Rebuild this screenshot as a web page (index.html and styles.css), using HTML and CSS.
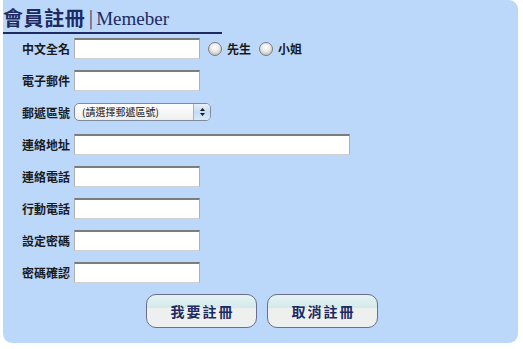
FILE: index.html
```html
<!DOCTYPE html>
<html lang="zh-Hant">
<head>
<meta charset="utf-8">
<link rel="stylesheet" href="styles.css">
</head>
<body>
<div class="panel">
  <div class="title"><span class="zh">會員註冊</span><span class="bar">|</span><span class="en">Memeber</span></div>
  <div class="form">
    <div class="row"><label class="lbl">中文全名</label><input class="txt" type="text">
      <span class="radio"></span><span class="opt">先生</span><span class="radio"></span><span class="opt">小姐</span></div>
    <div class="row"><label class="lbl">電子郵件</label><input class="txt" type="text"></div>
    <div class="row"><label class="lbl">郵遞區號</label>
      <div class="select"><span class="sel-text">(請選擇郵遞區號)</span><span class="sel-arrow"><svg width="7" height="10" viewBox="0 0 7 10"><path d="M1 4 L3.5 1 L6 4 Z M1 6 L3.5 9 L6 6 Z" fill="#1a1a1a"/></svg></span></div></div>
    <div class="row"><label class="lbl">連絡地址</label><input class="txt wide" type="text"></div>
    <div class="row"><label class="lbl">連絡電話</label><input class="txt" type="text"></div>
    <div class="row"><label class="lbl">行動電話</label><input class="txt" type="text"></div>
    <div class="row"><label class="lbl">設定密碼</label><input class="txt" type="text"></div>
    <div class="row"><label class="lbl">密碼確認</label><input class="txt" type="text"></div>
  </div>
  <div class="buttons">
    <button class="btn">我要註冊</button>
    <button class="btn">取消註冊</button>
  </div>
</div>
</body>
</html>
```
FILE: styles.css
```css
html, body { margin: 0; padding: 0; background: #ffffff; }
body { font-family: "Noto Sans CJK TC", "Liberation Sans", sans-serif; }
.panel {
  margin-left: 3px;
  width: 515px;
  height: 343px;
  background: #bbd8fa;
  border-radius: 0 9px 9px 9px;
  box-sizing: border-box;
}
.title {
  width: 219px;
  height: 34px;
  border-bottom: 2px solid #1d2a63;
  display: flex;
  align-items: flex-end;
  color: #1d2a63;
  box-sizing: border-box;
  padding-bottom: 2px;
}
.title .zh { font-size: 20px; line-height: 24px; font-weight: 700; letter-spacing: 0.6px; }
.title .bar { font-family: "DejaVu Sans", sans-serif; font-size: 20px; line-height: 24px; margin: 0 2px 0 2px; font-weight: 300; }
.title .en { font-family: "Liberation Serif", serif; font-size: 19px; line-height: 22px; }
.form { margin-top: 4px; display: flex; flex-direction: column; }
.row { height: 32px; display: flex; align-items: flex-start; }
.lbl {
  width: 67px;
  text-align: right;
  font-size: 12px;
  font-weight: 700;
  line-height: 21px;
  color: #1a1a1a;
  margin-right: 4px;
}
.txt {
  width: 126px;
  height: 21px;
  box-sizing: border-box;
  border: 1px solid #b0b0b0;
  border-top: 2px solid #7c7c7c;
  border-bottom-color: #d0d0d0;
  background: #fff;
  margin: 0;
  padding: 0;
}
.txt.wide { width: 276px; }
.radio {
  width: 12px; height: 12px; border-radius: 50%;
  margin: 4px 3px 0 8px;
  background: radial-gradient(circle at 50% 35%, #ffffff 0%, #e8e8e8 45%, #aaaaaa 100%);
  border: 1px solid #7d7d7d;
}
.opt { font-size: 12px; font-weight: 700; line-height: 21px; color: #1a1a1a; margin-left: 2px; }
.select {
  margin-top: 1px;
  width: 137px; height: 18px;
  box-sizing: border-box;
  border: 1px solid #7f8a9a;
  border-radius: 5px;
  background: linear-gradient(#ffffff, #eeeeee);
  display: flex;
  align-items: center;
  justify-content: space-between;
  overflow: hidden;
}
.sel-text { font-size: 10px; color: #111; padding-left: 7px; line-height: 16px; }
.sel-arrow {
  width: 16px; height: 16px;
  display: flex; align-items: center; justify-content: center;
  background: linear-gradient(#e6f0fb, #c3dbf5 50%, #d9e8f9);
  border-left: 1px solid #9fb3cf;
}
.buttons {
  margin-top: 0;
  display: flex;
  gap: 10px;
  padding-left: 143px;
}
.btn {
  width: 111px; height: 34px;
  box-sizing: border-box;
  border: 1px solid #6b6d8c;
  border-radius: 10px;
  background: linear-gradient(#e6f2f2 0%, #d3eaea 40%, #eef0f0 42%, #eef0f0 100%);
  color: #1d2a63;
  font-family: "Noto Sans CJK TC", sans-serif;
  font-size: 14px;
  font-weight: 700;
  letter-spacing: 2px;
  padding: 0 0 0 2px;
}
```
